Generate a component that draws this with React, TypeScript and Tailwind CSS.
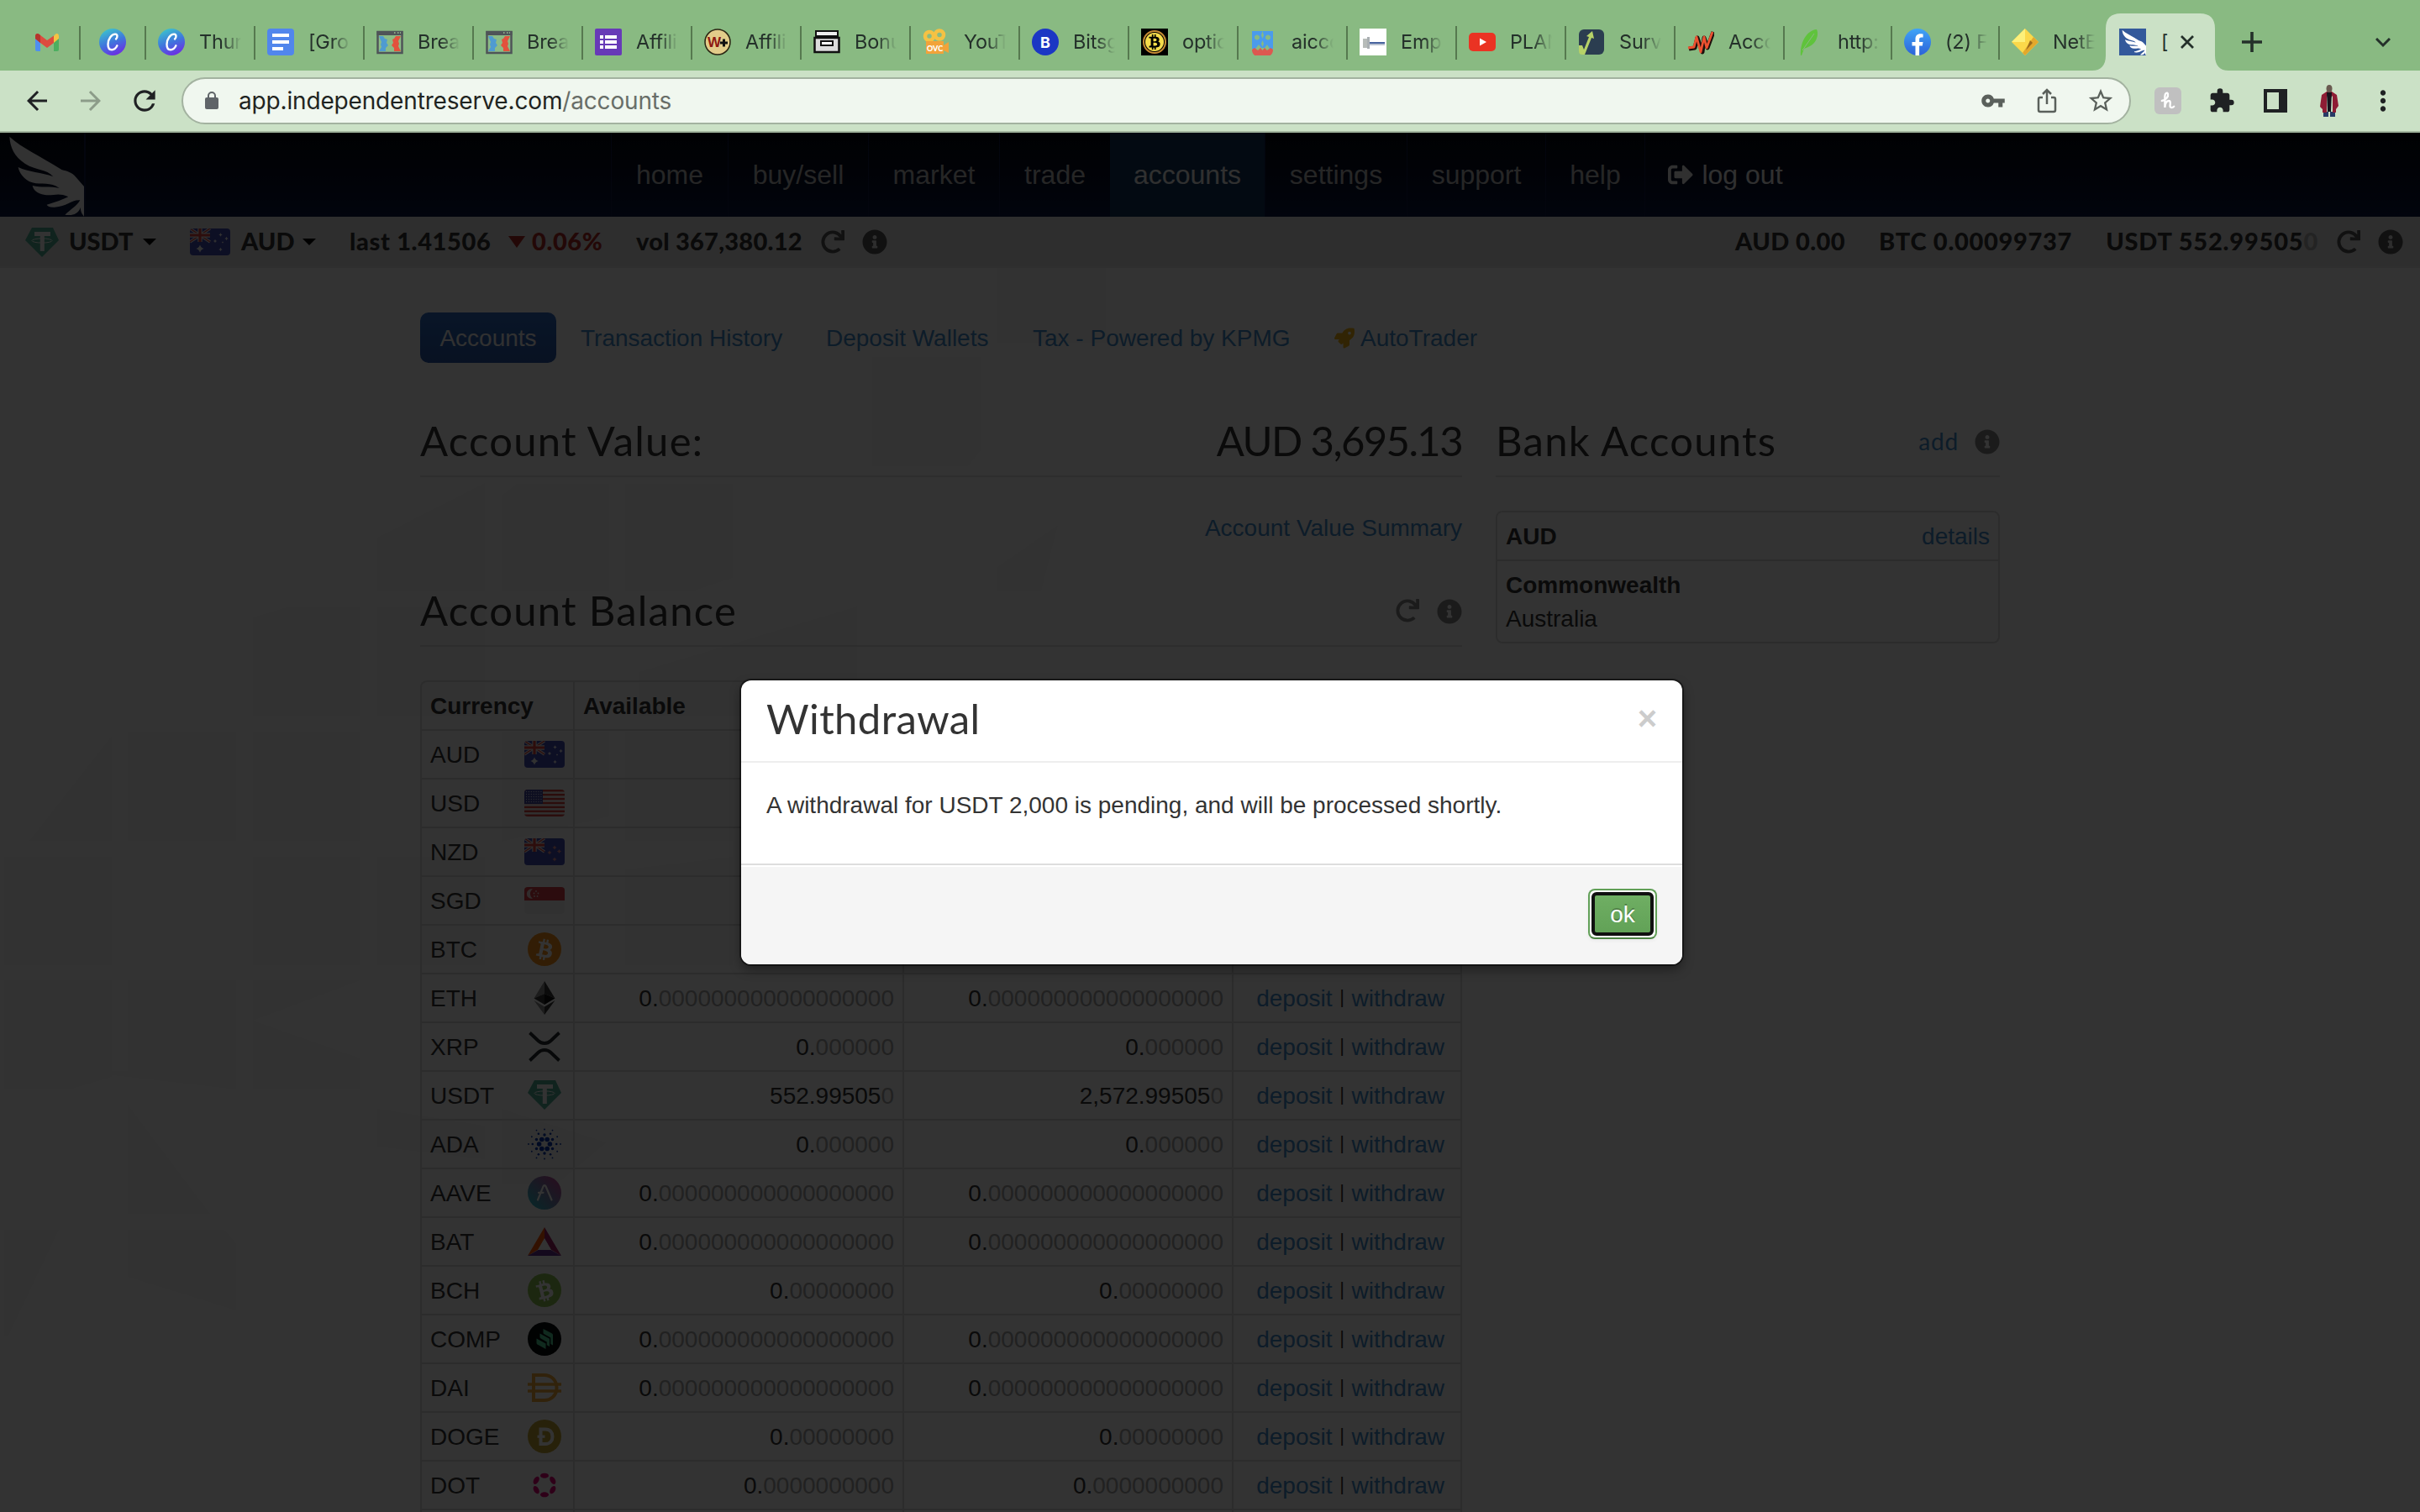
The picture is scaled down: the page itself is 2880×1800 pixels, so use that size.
import React from "react";
import { FaBtc, FaInfoCircle, FaRedo, FaRocket, FaSignOutAlt } from "react-icons/fa";
import {
  MdArrowBack,
  MdArrowForward,
  MdExtension,
  MdMoreVert,
  MdRefresh,
  MdStarBorder,
  MdVpnKey,
} from "react-icons/md";

/* ---------- favicons ---------- */

const Gmail = () => (
  <svg viewBox="0 0 32 32" className="size-8">
    <path d="M2 8v17a2 2 0 0 0 2 2h4V13z" fill="#4f8ff0" />
    <path d="M30 8v17a2 2 0 0 1-2 2h-4V13z" fill="#4caf60" />
    <path d="M24 9l2-2.400c2-1.200 4-.3 4 2.400v3l-6 5z" fill="#f5c342" />
    <path d="M2 9c0-3 3-3.600 4.500-2.200L16 14l8-5.500V17l-8 6-8-6-6-5z" fill="#dd4b3e" />
    <path d="M2 9c0-3 3-3.600 4.500-2.200L8 8v9l-6-5z" fill="#b5352c" />
  </svg>
);
const Canva = () => (
  <svg viewBox="0 0 32 32" className="size-8">
    <defs>
      <linearGradient id="cv" x1="0.3" y1="0" x2="0.7" y2="1">
        <stop offset="0" stopColor="#3cc2cd" />
        <stop offset="0.5" stopColor="#3f76dd" />
        <stop offset="1" stopColor="#7028e4" />
      </linearGradient>
    </defs>
    <circle cx="16" cy="16" r="16" fill="url(#cv)" />
    <path
      d="M20 12.500c2.200-2 2-5.600-.6-5.900-4.500-.4-8.900 6.200-8.900 12.100 0 4 1.700 6.600 4.600 6.600 2.700 0 5-2.200 6.300-5"
      fill="none"
      stroke="#fff"
      strokeWidth="2.400"
      strokeLinecap="round"
    />
  </svg>
);
const Docs = () => (
  <svg viewBox="0 0 32 32" className="size-8">
    <rect width="32" height="32" rx="4" fill="#5186ec" />
    <path d="M6 6h20v4H6zM6 14h20v4H6zM6 22h13v4H6z" fill="#fff" />
  </svg>
);
const Funnel = () => (
  <svg viewBox="0 0 32 32" className="size-8">
    <rect x="1.500" y="4" width="29" height="25" fill="#8cbc86" stroke="#4f5458" strokeWidth="2.500" />
    <rect x="0.500" y="3" width="31" height="5" fill="#4f5458" />
    <path d="M21 5h1.500M25 5h1.500M28 5h1" stroke="#9cc295" strokeWidth="1.500" />
    <path d="M3 9h5l2 3 3 1-1 4 2 3-3 3v4H3l3-5-1-3 1-3z" fill="#4f9bd0" />
    <path d="M29 9h-6l-2 3-2 1 1 4-2 3 3 3v4h8l-3-6 1-3-1-3z" fill="#e2523d" />
  </svg>
);
const Forms = () => (
  <svg viewBox="0 0 32 32" className="size-8">
    <rect width="32" height="32" rx="2" fill="#673ab7" />
    <path
      d="M6 8h4v4H6zM12 8h14v4H12zM6 14h4v4H6zM12 14h14v4H12zM6 20h4v4H6zM12 20h14v4H12z"
      fill="#fff"
    />
  </svg>
);
const WPlus = () => (
  <svg viewBox="0 0 32 32" className="size-8">
    <circle cx="16" cy="16" r="15" fill="#e2cc8a" stroke="#2a2412" strokeWidth="1.500" />
    <text x="4" y="22" fontSize="17" fontWeight="900" fill="#8e1a12" fontFamily="Liberation Sans, sans-serif">
      W
    </text>
    <path d="M19 17h9M23.500 12.500v9" stroke="#111" strokeWidth="3" />
  </svg>
);
const Box = () => (
  <svg viewBox="0 0 32 32" className="size-8">
    <path d="M3 3h26v6H3z" fill="#eee" stroke="#111" strokeWidth="2" />
    <path d="M1.500 11h29v17h-29z" fill="#ddd" stroke="#111" strokeWidth="2.500" />
    <path d="M9 15h14v5H9z" fill="#fff" stroke="#111" strokeWidth="2" />
  </svg>
);
const Camera = () => (
  <svg viewBox="0 0 32 32" className="size-8">
    <circle cx="8" cy="9" r="5" fill="none" stroke="#f5c243" strokeWidth="4.500" />
    <circle cx="20" cy="7.500" r="5" fill="none" stroke="#f5c243" strokeWidth="4.500" />
    <path d="M4 15h21v5l6-4v13l-6-3v4H4z" fill="#f2a33a" />
    <text x="5" y="26.500" fontSize="9" fontWeight="900" fill="#fff" fontFamily="Lato, sans-serif">
      OVC
    </text>
  </svg>
);
const BlueB = () => (
  <svg viewBox="0 0 32 32" className="size-8">
    <circle cx="16" cy="16" r="16" fill="#1b37c4" />
    <text x="16" y="22.500" textAnchor="middle" fontSize="18" fontWeight="700" fill="#fff" fontFamily="Inter, sans-serif">
      B
    </text>
  </svg>
);
const GoldBtc = () => (
  <div className="flex size-8 items-center justify-center bg-black">
    <div className="flex size-[28px] items-center justify-center rounded-full border-2 border-[#c58a34]">
      <div className="flex size-[22px] items-center justify-center rounded-full bg-[#f5dc4b]">
        <FaBtc className="size-[18px] text-black" />
      </div>
    </div>
  </div>
);
const Aicc = () => (
  <svg viewBox="0 0 32 32" className="size-8">
    <path d="M2 3h25v21h-4l-3-5-3 4h-4l-3-4-4 5H2z" fill="#4a9bec" />
    <path d="M14.500 3l1.500 5-1.500 4L13 8zM14.500 14l1.500 4-1.500 4-1.500-4z" fill="#89ba82" />
    <g fill="#89ba82" stroke="#89ba82">
      <circle cx="8" cy="10.500" r="2.600" />
      <circle cx="21" cy="10.500" r="2.600" />
    </g>
    <path d="M2 25l3-2 4 3 3-3 2.500 3 2.500-3 3 3 4-3 3 2c0 6-4 8.500-9 8.500h-7C5 33.500 2 30 2 25z" fill="#dd5850" />
  </svg>
);
const Emp = () => (
  <svg viewBox="0 0 32 32" className="size-8">
    <rect width="32" height="32" fill="#fff" />
    <path d="M4 12h5v11H4z" fill="#b7bcb9" />
    <path d="M9 10h3v14H9z" fill="#a9afb2" />
    <path d="M12 16h18v2H12z" fill="#47639f" />
    <path d="M12 18h18v2H12z" fill="#b9c1d0" />
  </svg>
);
const YouTube = () => (
  <svg viewBox="0 0 32 32" className="size-8">
    <rect y="5" width="32" height="22" rx="5" fill="#ea3323" />
    <path d="M13 11.500v9l8-4.500z" fill="#fff" />
  </svg>
);
const Surv = () => (
  <svg viewBox="0 0 32 32" className="size-8">
    <rect x="1" y="1" width="30" height="30" rx="6" fill="#2b3d50" />
    <path d="M1 20h4l2 5 6-15-3-1 7-6 2 9-3-1-8 20H5c-2 0-4-1-4-4z" fill="#b6d268" />
  </svg>
);
const Acco = () => (
  <svg viewBox="0 0 32 32" className="size-8" fill="none" strokeLinejoin="round">
    <path d="M2 24l7-1 3-12 6 17 2-17 4 12 7-19" stroke="#1d100d" strokeWidth="5" />
    <path d="M1 23l7-1 3-12 5 18 4-18 3 13 7-19" stroke="#ec5130" strokeWidth="2.800" />
  </svg>
);
const Feather = () => (
  <svg viewBox="0 0 32 32" className="size-8">
    <path d="M5 32C4 17 12 2 24 1c2 4 1 9-1 13-3 6-9 8-14 10l-3 8z" fill="#5fc33c" />
    <path d="M7 26L21 6" stroke="#8aba82" strokeWidth="1" />
  </svg>
);
const Facebook = () => (
  <svg viewBox="0 0 32 32" className="size-8">
    <defs>
      <linearGradient id="fb" x1="0" y1="0" x2="0" y2="1">
        <stop offset="0" stopColor="#3fa4f7" />
        <stop offset="1" stopColor="#2c62d9" />
      </linearGradient>
    </defs>
    <circle cx="16" cy="16" r="16" fill="url(#fb)" />
    <path d="M13.500 32V20.500H9.500V16h4v-3.500c0-4 2.300-6.200 5.900-6.200 1.700 0 3.200.3 3.200.3v4h-2c-2 0-2.500 1.200-2.500 2.500V16h4.400l-.7 4.500h-3.700V32z" fill="#fff" />
  </svg>
);
const Diamond = () => (
  <svg viewBox="0 0 32 32" className="size-8">
    <path d="M16 0l16 16-16 16L0 16z" fill="#fbd84a" />
    <path d="M16 0L0 16h16z" fill="#fdf07a" />
    <path d="M26 10l6 6-16 16-3-3z" fill="#e3a82c" />
    <path d="M22 14l3 3-8 9z" fill="#9a6b1c" />
  </svg>
);
const WING =
  "M34 38C80 80 140 105 220 156C240 162 256 164 272 184L300 216V323C290 312 287 300 288 290C280 312 262 322 232 317C250 300 275 285 286 265C255 262 240 288 195 290C180 291 170 288 167 281C200 272 225 262 244 253C210 236 190 250 160 246C130 242 118 225 116 213C145 222 180 213 212 222C180 198 150 212 115 202C85 193 68 165 65 147C100 165 150 165 190 181C165 152 130 160 90 135C50 108 36 75 34 38Z";
const WingTab = () => (
  <svg viewBox="0 0 32 32" className="size-8">
    <rect width="32" height="32" fill="#33599b" />
    <svg x="0" y="0" width="32" height="32" viewBox="0 22 300 302" preserveAspectRatio="none">
      <path d={WING} fill="#fff" />
    </svg>
  </svg>
);

/* ---------- browser chrome ---------- */

type TabItem = { icon: React.ReactNode; label: string; narrow?: boolean };
const tabs: TabItem[] = [
  { icon: <Canva />, label: "Thur" },
  { icon: <Docs />, label: "[Gro" },
  { icon: <Funnel />, label: "Brea" },
  { icon: <Funnel />, label: "Brea" },
  { icon: <Forms />, label: "Affili" },
  { icon: <WPlus />, label: "Affili" },
  { icon: <Box />, label: "Bonu" },
  { icon: <Camera />, label: "YouT" },
  { icon: <BlueB />, label: "Bitsg" },
  { icon: <GoldBtc />, label: "optic" },
  { icon: <Aicc />, label: "aicco" },
  { icon: <Emp />, label: "Emp" },
  { icon: <YouTube />, label: "PLAN" },
  { icon: <Surv />, label: "Surv" },
  { icon: <Acco />, label: "Acco" },
  { icon: <Feather />, label: "http:", narrow: true },
  { icon: <Facebook />, label: "(2) F", narrow: true },
  { icon: <Diamond />, label: "NetE", narrow: true },
];

function TabStrip() {
  return (
    <div className="flex h-[84px] bg-[#89ba82] text-[#24302a]">
      <div className="flex w-[94px] items-center pt-4 pl-10">
        <Gmail />
      </div>
      <div className="flex w-[78px] items-center pt-4">
        <div className="mt-0.5 h-10 w-0.5 bg-[#56794f]" />
        <div className="ml-[22px]">
          <Canva />
        </div>
      </div>
      {tabs.map((t, i) => (
        <div key={i} className={`flex shrink-0 items-center pt-4 ${t.narrow ? "w-[128px]" : "w-[130px]"}`}>
          <div className="mt-0.5 h-10 w-0.5 shrink-0 bg-[#56794f]" />
          <div className="ml-[14px] size-8 shrink-0">{t.icon}</div>
          <div className="ml-[17px] w-[50px] overflow-hidden text-[23.500px] leading-8 tracking-[-0.2px] whitespace-nowrap [mask-image:linear-gradient(to_right,#000_55%,transparent)]">
            {t.label}
          </div>
        </div>
      ))}
      <div className="relative flex h-full w-[130px] shrink-0 items-end">
        <svg className="absolute bottom-0 -left-4 h-[68px] w-[162px]" viewBox="0 0 162 68">
          <path d="M0 68C10 68 16 62 16 50V18C16 6 22 0 34 0H128C140 0 146 6 146 18V50C146 62 152 68 162 68Z" fill="#cbe1c6" />
        </svg>
        <div className="relative flex h-[68px] w-full items-center pl-4">
          <WingTab />
          <span className="ml-[18px] text-[23px] leading-8">[</span>
          <svg viewBox="0 0 16 16" className="ml-[15px] size-4" stroke="#24302a" strokeWidth="2.800">
            <path d="M1 1l14 14M15 1L1 15" />
          </svg>
        </div>
      </div>
      <svg viewBox="0 0 24 24" className="mt-[38px] ml-8 size-6" stroke="#24302a" strokeWidth="3.600">
        <path d="M0 12h24M12 0v24" />
      </svg>
      <svg viewBox="0 0 18 12" className="mt-[45px] mr-[35px] ml-auto h-3 w-[18px]" fill="none" stroke="#24302a" strokeWidth="3">
        <path d="M1 1l8 8 8-8" />
      </svg>
    </div>
  );
}

function Slot({ children }: { children: React.ReactNode }) {
  return <div className="flex w-16 shrink-0 items-center justify-center">{children}</div>;
}

function Toolbar() {
  return (
    <div className="flex h-[74px] items-center border-b-2 border-[#a2b59e] bg-[#cbe1c6] pl-3 text-[#1f2123]">
      <Slot>
        <MdArrowBack className="size-9" />
      </Slot>
      <Slot>
        <MdArrowForward className="size-9 text-[#8c9c89]" />
      </Slot>
      <Slot>
        <MdRefresh className="size-[38px]" />
      </Slot>
      <div className="ml-[12px] flex h-14 w-[2320px] items-center rounded-full border-2 border-[#a3b2a0] bg-[#f0f7ef] pl-[26px] text-[28px] text-[#1f2421]">
        <svg viewBox="0 0 16 22" className="h-[22px] w-4">
          <rect y="7" width="16" height="14" rx="2" fill="#5f6468" />
          <path d="M4 8V5a4 4 0 0 1 8 0v3" fill="none" stroke="#5f6468" strokeWidth="2" />
        </svg>
        <div className="ml-[24px] leading-9 tracking-[-0.16px]">
          app.independentreserve.com<span className="text-[#686e68]">/accounts</span>
        </div>
        <div className="ml-auto flex items-center pr-0.5 text-[#5a605b]">
          <Slot>
            <MdVpnKey className="size-[30px]" />
          </Slot>
          <Slot>
            <svg viewBox="0 0 24 30" className="h-[30px] w-6" fill="none" stroke="#5a605b" strokeWidth="2.500">
              <path d="M7 11H4a2 2 0 0 0-2 2v13a2 2 0 0 0 2 2h16a2 2 0 0 0 2-2V13a2 2 0 0 0-2-2h-3M12 19V3M7 7l5-5 5 5" />
            </svg>
          </Slot>
          <Slot>
            <MdStarBorder className="size-[34px]" />
          </Slot>
        </div>
      </div>
      <div className="ml-3 flex">
        <Slot>
          <div className="flex size-8 items-center justify-center rounded-md bg-[#c0c0c0]">
            <svg viewBox="0 0 20 24" className="h-[22px] w-[18px]" fill="none" stroke="#fff" strokeWidth="2.600" strokeLinecap="round">
              <path d="M2 12c5-1 9-5 8-9-1-3-4-1-4 3v15c0-5 2-9 5-9 4 0 1 6 2 8 1 1.500 3 1.500 5-.5" />
            </svg>
          </div>
        </Slot>
        <Slot>
          <MdExtension className="size-8" />
        </Slot>
        <Slot>
          <svg viewBox="0 0 28 28" className="size-7">
            <path d="M0 0h28v28H0z" fill="#1f2123" />
            <path d="M4 4h14v20H4z" fill="#cbe1c6" />
          </svg>
        </Slot>
        <Slot>
          <svg viewBox="0 0 24 40" className="h-10 w-6">
            <path d="M5 33h6v6H5zM13 33h6v6h-6z" fill="#283a66" />
            <path d="M3 13l6-4h6l6 4 2 13-3 4v4h-4V14l-4 4-3-4v20H4v-4l-3-3z" fill="#8e1c34" />
            <path d="M9 10h6l-1 23h-4z" fill="#17121c" />
            <ellipse cx="12" cy="5.500" rx="3.500" ry="4.500" fill="#6a5a50" />
          </svg>
        </Slot>
        <Slot>
          <MdMoreVert className="size-[38px]" />
        </Slot>
      </div>
    </div>
  );
}

/* ---------- flags and coins ---------- */

const UnionJack = () => (
  <g>
    <path d="M0 0l24 16M24 0L0 16" stroke="#eee" strokeWidth="3.400" />
    <path d="M0 0l24 16M24 0L0 16" stroke="#e0433f" strokeWidth="1.400" />
    <path d="M12 0v16M0 8h24" stroke="#eee" strokeWidth="5.400" />
    <path d="M12 0v16M0 8h24" stroke="#e0433f" strokeWidth="3.200" />
  </g>
);
const Flag = ({ children, bg }: { children: React.ReactNode; bg: string }) => (
  <svg viewBox="0 0 48 32" className="h-8 w-12 rounded-[4px]">
    <rect width="48" height="32" fill={bg} />
    {children}
  </svg>
);
const Stars = ({ pts, fill }: { pts: number[][]; fill: string }) => (
  <>
    {pts.map(([x, y, r], i) => (
      <path
        key={i}
        d={`M${x} ${y - r}L${x + r * 0.35} ${y - r * 0.35}L${x + r} ${y}L${x + r * 0.35} ${y + r * 0.35}L${x} ${y + r}L${x - r * 0.35} ${y + r * 0.35}L${x - r} ${y}L${x - r * 0.35} ${y - r * 0.35}Z`}
        fill={fill}
      />
    ))}
  </>
);
const FlagAU = () => (
  <Flag bg="#434bb4">
    <UnionJack />
    <Stars pts={[[12, 24, 4.5], [36.5, 7.5, 2.2], [30, 15, 2.2], [43.5, 12, 2.2], [39, 16.5, 1.2], [36.5, 25, 2.2]]} fill="#f4f4f4" />
    <circle cx="12" cy="24" r="2.300" fill="#f4f4f4" />
  </Flag>
);
const FlagNZ = () => (
  <Flag bg="#434bb4">
    <UnionJack />
    <Stars pts={[[36, 11, 2.6], [30, 17, 2.6], [41.5, 15.5, 2.6], [36, 25, 2.6]]} fill="#e28f95" />
  </Flag>
);
const FlagUS = () => (
  <Flag bg="#f0f0f0">
    {[0, 1, 2, 3, 4, 5, 6].map((i) => (
      <rect key={i} y={i * 4.92} width="48" height="2.460" fill="#d8403e" />
    ))}
    <rect width="22" height="17" fill="#4046a0" />
    {Array.from({ length: 35 }).map((_, i) => (
      <circle key={i} cx={2.5 + (i % 7) * 2.9} cy={2.5 + Math.floor(i / 7) * 3} r="0.700" fill="#d5d5ee" />
    ))}
  </Flag>
);
const FlagSG = () => (
  <Flag bg="#f6f6f6">
    <rect width="48" height="16" fill="#dc3c45" />
    <path d="M10 2.500a5.700 5.700 0 1 0 0 11a6.500 6.500 0 0 1 0-11z" fill="#f3dcdc" />
    {[[14, 5], [11.5, 7.5], [16.5, 7.5], [12, 11], [15.5, 11]].map(([x, y], i) => (
      <circle key={i} cx={x} cy={y} r="0.900" fill="#f3dcdc" />
    ))}
  </Flag>
);

const Coin = ({ children }: { children: React.ReactNode }) => (
  <svg viewBox="0 0 40 40" className="size-10">
    {children}
  </svg>
);
const Btc = () => (
  <div className="flex size-10 items-center justify-center rounded-full bg-[#f7931a]">
    <FaBtc className="size-[25px] rotate-[12deg] text-white" />
  </div>
);
const Bch = () => (
  <div className="flex size-10 items-center justify-center rounded-full bg-[#8dc351]">
    <FaBtc className="size-[25px] -rotate-[14deg] text-white" />
  </div>
);
const Eth = () => (
  <Coin>
    <path d="M20 0L7.500 20.500 20 15z" fill="#8a8a8a" />
    <path d="M20 0l12.500 20.500L20 15z" fill="#393939" />
    <path d="M20 15L7.500 20.500 20 28z" fill="#393939" />
    <path d="M20 15l12.500 5.500L20 28z" fill="#111" />
    <path d="M7.500 23L20 30.500V40z" fill="#8a8a8a" />
    <path d="M32.500 23L20 30.500V40z" fill="#393939" />
  </Coin>
);
const Xrp = () => (
  <Coin>
    <path
      d="M2.500 3.500l10 9.500c4.200 4 10.800 4 15 0L37.500 3.500M2.500 36.500l10-9.500c4.200-4 10.800-4 15 0L37.500 36.500"
      fill="none"
      stroke="#23292f"
      strokeWidth="3.800"
    />
  </Coin>
);
const Usdt = () => (
  <svg viewBox="0 0 40 36" className="h-9 w-10">
    <path d="M8 0h25l7 15-20 20L0 15z" fill="#50af95" />
    <path d="M11 5h19v5h-7.200v18h-5V10H11z" fill="#fff" />
    <ellipse cx="20" cy="15.500" rx="12" ry="2.600" fill="none" stroke="#fff" strokeWidth="1" />
  </svg>
);
const ring = (n: number, r: number, off: number) =>
  Array.from({ length: n }).map((_, i) => {
    const a = ((off + (360 / n) * i) * Math.PI) / 180;
    return [20 + r * Math.cos(a), 20 + r * Math.sin(a)];
  });
const Ada = () => (
  <Coin>
    {ring(6, 6.4, 0).map(([x, y], i) => (
      <circle key={`a${i}`} cx={x} cy={y} r="2.800" fill="#0033ad" />
    ))}
    {ring(6, 11, 30).map(([x, y], i) => (
      <circle key={`b${i}`} cx={x} cy={y} r="1.700" fill="#0033ad" />
    ))}
    {ring(6, 14.2, 0).map(([x, y], i) => (
      <circle key={`c${i}`} cx={x} cy={y} r="1.300" fill="#0033ad" />
    ))}
    {ring(6, 17.5, 30)
      .concat(ring(6, 19, 0))
      .map(([x, y], i) => (
        <circle key={`d${i}`} cx={x} cy={y} r="0.900" fill="#0033ad" />
      ))}
  </Coin>
);
const Aave = () => (
  <Coin>
    <defs>
      <linearGradient id="aave" x1="0.1" y1="0.9" x2="0.85" y2="0.15">
        <stop offset="0" stopColor="#2ebac6" />
        <stop offset="1" stopColor="#b6509e" />
      </linearGradient>
    </defs>
    <circle cx="20" cy="20" r="20" fill="url(#aave)" />
    <path d="M12 28.500l6.500-16.200c.6-1.500 2.400-1.500 3 0L28.500 28.500M13 19.800h5.500" fill="none" stroke="#fff" strokeWidth="2.200" strokeLinecap="round" />
  </Coin>
);
const Bat = () => (
  <Coin>
    <path d="M20 3v14l-7.500 12.500L0 37z" fill="#ff5500" />
    <path d="M20 3v14l7.500 12.500L40 37z" fill="#9e1f63" />
    <path d="M0 37l12.500-7h15L40 37z" fill="#662d91" />
    <path d="M20 16l8 14H12z" fill="#fff" />
  </Coin>
);
const Comp = () => (
  <Coin>
    <circle cx="20" cy="20" r="20" fill="#070a0e" />
    <path d="M10.500 19.500l11 6v6.500l-10-5.500q-1-.6-1-2z" fill="#4fd197" />
    <path d="M14.500 13.500l11.500 6.200v9.300l-3.200-1.800v-3.700l-7.500-4.200q-.8-.6-.8-1.800z" fill="#4fd197" />
    <path d="M18.500 8l10.500 5.500q1 .6 1 2v12l-2.700-1.500v-7.500l-8-4.500q-.8-.5-.8-1.600z" fill="#4fd197" />
  </Coin>
);
const Dai = () => (
  <Coin>
    <path d="M7 5h12.500c8.500 0 15 6 15 15s-6.500 15-15 15H7z" fill="none" stroke="#f5ac37" strokeWidth="4" />
    <path d="M0 16h40M0 24h40" stroke="#f5ac37" strokeWidth="3.600" />
  </Coin>
);
const Doge = () => (
  <Coin>
    <circle cx="20" cy="20" r="20" fill="#c2a633" />
    <path d="M15.500 11.500H21c5.500 0 8.500 3.600 8.500 8.700S26.500 29 21 29h-5.500z" fill="none" stroke="#fff" strokeWidth="4" />
    <path d="M11.500 20.200h9" stroke="#fff" strokeWidth="3.200" />
  </Coin>
);
const Dot = () => (
  <Coin>
    {[0, 60, 120, 180, 240, 300].map((a) => (
      <ellipse key={a} cx="20" cy="8.700" rx="5" ry="3" fill="#e6007a" transform={`rotate(${a} 20 20)`} />
    ))}
  </Coin>
);

/* ---------- page ---------- */

const nav: [string, string][] = [
  ["home", "w-[139px]"],
  ["buy/sell", "w-[167px]"],
  ["market", "w-[156px]"],
  ["trade", "w-[132px]"],
  ["accounts", "w-[184px]"],
  ["settings", "w-[169px]"],
  ["support", "w-[165px]"],
  ["help", "w-[118px]"],
  ["log out", "w-[192px]"],
];

function NavBar() {
  return (
    <div className="flex h-[100px] bg-gradient-to-b from-[#04080f] via-[#060f2b] via-60% to-[#0a1842]">
      <div className="w-[102px] border-r-2 border-[#0f1c48]">
        <svg viewBox="0 24 300 300" className="size-[100px]">
          <path d={WING} fill="#fafafa" />
        </svg>
      </div>
      <div className="ml-[625px] flex text-[32px]">
        {nav.map(([label, w]) => {
          const active = label === "accounts";
          const bright = active || label === "log out";
          return (
            <div
              key={label}
              className={`flex items-center justify-center ${w} ${active ? "bg-[#12355a]" : "border-l border-[#0f1c48]"} ${bright ? "text-[#f0f0f0]" : "text-[#bcbcbc]"}`}
            >
              {label === "log out" && <FaSignOutAlt className="mr-2.5 size-[30px]" />}
              {label}
            </div>
          );
        })}
      </div>
    </div>
  );
}

const Caret = () => (
  <span className="ml-[10px] h-0 w-0 border-x-8 border-t-8 border-x-transparent border-t-black" />
);

function TickerBar() {
  return (
    <div className="flex h-[61px] items-center border-b-2 border-[#ececec] bg-[#e6e6e6] pr-5 pl-[30px] font-[Lato] text-[29px] leading-[58px] font-black text-[#333]">
      <div className="h-[34px]">
        <Usdt />
      </div>
      <span className="ml-3 w-[78px] pb-0.5">USDT</span>
      <Caret />
      <div className="ml-[40px] h-8">
        <FlagAU />
      </div>
      <span className="ml-[13px] w-[63px] pb-0.5">AUD</span>
      <Caret />
      <span className="ml-[40px] w-[170px] pb-0.5 tracking-[0.65px] whitespace-nowrap">last 1.41506</span>
      <span className="ml-[19px] h-0 w-0 border-x-[10px] border-t-[14px] border-x-transparent border-t-[#b02a25]" />
      <span className="ml-2 w-[84px] pb-0.5 tracking-[0.6px] text-[#b02a25]">0.06%</span>
      <span className="ml-[40px] w-[198px] pb-0.5 tracking-[0.25px] whitespace-nowrap">vol 367,380.12</span>
      <FaRedo className="ml-[22px] size-[28px] text-[#555]" />
      <FaInfoCircle className="ml-[21px] size-[30px] text-[#555]" />
      <span className="ml-auto pb-0.5 tracking-[0.4px]">AUD 0.00</span>
      <span className="ml-[40px] pb-0.5 tracking-[0.7px]">BTC 0.00099737</span>
      <span className="ml-[40px] pb-0.5 tracking-[0.8px]">
        USDT 552.99505<span className="text-[#b0b0b0]">0</span>
      </span>
      <FaRedo className="ml-[22px] size-[28px] text-[#555]" />
      <FaInfoCircle className="ml-[21px] size-[30px] text-[#555]" />
    </div>
  );
}

type Row = { c: string; icon: React.ReactNode; a?: [string, string]; t?: [string, string] };
const Z18 = "000000000000000000";
const rows: Row[] = [
  { c: "AUD", icon: <FlagAU /> },
  { c: "USD", icon: <FlagUS /> },
  { c: "NZD", icon: <FlagNZ /> },
  { c: "SGD", icon: <FlagSG /> },
  { c: "BTC", icon: <Btc /> },
  { c: "ETH", icon: <Eth />, a: ["0.", Z18], t: ["0.", Z18] },
  { c: "XRP", icon: <Xrp />, a: ["0.", "000000"], t: ["0.", "000000"] },
  { c: "USDT", icon: <Usdt />, a: ["552.99505", "0"], t: ["2,572.99505", "0"] },
  { c: "ADA", icon: <Ada />, a: ["0.", "000000"], t: ["0.", "000000"] },
  { c: "AAVE", icon: <Aave />, a: ["0.", Z18], t: ["0.", Z18] },
  { c: "BAT", icon: <Bat />, a: ["0.", Z18], t: ["0.", Z18] },
  { c: "BCH", icon: <Bch />, a: ["0.", "00000000"], t: ["0.", "00000000"] },
  { c: "COMP", icon: <Comp />, a: ["0.", Z18], t: ["0.", Z18] },
  { c: "DAI", icon: <Dai />, a: ["0.", Z18], t: ["0.", Z18] },
  { c: "DOGE", icon: <Doge />, a: ["0.", "00000000"], t: ["0.", "00000000"] },
  { c: "DOT", icon: <Dot />, a: ["0.", "0000000000"], t: ["0.", "0000000000"] },
];

const Amount = ({ v }: { v?: [string, string] }) => (
  <div className="border-l-2 border-[#ddd] pr-[10px] text-right">
    {v && (
      <>
        {v[0]}
        <span className="text-[#a6a6a6]">{v[1]}</span>
      </>
    )}
  </div>
);

function BalanceTable() {
  return (
    <div className="mt-10 rounded-t-lg border-2 border-b-0 border-[#ddd] leading-[58px]">
      <div className="grid h-14 grid-cols-[180px_392px_392px_1fr] font-bold">
        <div className="pl-[10px]">Currency</div>
        <div className="border-l-2 border-[#ddd] pl-[10px]">Available</div>
        <div className="border-l-2 border-[#ddd]" />
        <div className="border-l-2 border-[#ddd]" />
      </div>
      {rows.map((r) => (
        <div key={r.c} className="grid h-[58px] grid-cols-[180px_392px_392px_1fr] grid-rows-[56px] border-t-2 border-[#ddd]">
          <div className="flex justify-between pr-[10px] pl-[10px]">
            {r.c}
            <div className="flex h-14 w-12 items-center justify-center">{r.icon}</div>
          </div>
          <Amount v={r.a} />
          <Amount v={r.t} />
          <div className="flex justify-end border-l-2 border-[#ddd] pr-[19px]">
            {r.a && (
              <>
                <span className="text-[#428bca]">deposit</span>
                <span className="w-[23px] text-center text-[22px] leading-[54px]">|</span>
                <span className="text-[#428bca]">withdraw</span>
              </>
            )}
          </div>
        </div>
      ))}
      <div className="grid h-[58px] grid-cols-[180px_392px_392px_1fr] border-t-2 border-[#ddd]">
        <div />
        <div className="border-l-2 border-[#ddd]" />
        <div className="border-l-2 border-[#ddd]" />
        <div className="border-l-2 border-[#ddd]" />
      </div>
    </div>
  );
}

const Heading = ({ children, tight }: { children: React.ReactNode; tight?: boolean }) => (
  <h2 className={`font-[Lato] text-[49px] leading-[77px] text-[#333] ${tight ? "tracking-[-1.6px]" : "tracking-[1.25px]"}`}>
    {children}
  </h2>
);

function Backdrop() {
  return (
    <svg viewBox="0 0 1400 1642" className="absolute top-0 left-0 h-[1642px] w-[1400px]" fill="#f9f9f9">
      <g transform="translate(0 -158)">
        <path d="M1186 278h130v130h-130zM1038 425h130v110l-16 20h-114zM1187 675l72-50-20 79h-52z" />
        <path d="M449 640l128-65v128H449zM615 576h110v127H597V590zM744 576h128v112l-45 15h-83z" />
        <path d="M301 735l40-12h88v129H301zM449 723h128v129H449zM760 800l260-78v130H760z" />
        <path d="M35 1001l98-125v125zM152 872h129v129H152zM301 872h128v129H301zM597 872h128v100l-128 30zM744 872h128v129H744z" />
        <path d="M5 1020h128v129H5zM301 1020h128v129H301zM449 1020h128v129H449zM744 1035l128-15v129H744z" />
        <path d="M5 1167h128v115l-50 15H5zM152 1167h129v130l-190-22h61zM301 1167h128l-128 48zM301 1215l128 45v37H301z" />
        <path d="M152 1315l98 130h-98zM449 1320l128 20v40l-128-15zM597 1320l125 40-60 50h-65z" />
        <path d="M5 1464h65L10 1590H5zM152 1464h115l14 16v80l-129-40z" />
      </g>
    </svg>
  );
}

function Page() {
  return (
    <div className="relative h-[1642px] overflow-hidden bg-white font-['Liberation_Sans',sans-serif] text-[28px] text-[#333]">
      <Backdrop />
      <div className="relative">
        <NavBar />
        <TickerBar />
        <div className="mx-auto w-[1880px]">
          <div className="mt-[53px] flex h-[60px] text-[28px] leading-[62px] text-[#428bca]">
            <div className="w-[162px] rounded-[10px] bg-gradient-to-b from-[#2e6cc4] to-[#2857a8] text-center text-[#f4f4f4]">
              Accounts
            </div>
            <div className="ml-[29px] w-[240px] whitespace-nowrap">Transaction History</div>
            <div className="ml-[52px] w-[194px] whitespace-nowrap">Deposit Wallets</div>
            <div className="ml-[52px] w-[306px] whitespace-nowrap">Tax - Powered by KPMG</div>
            <div className="ml-[53px] flex">
              <FaRocket className="mt-[18px] mr-[7px] h-[25px] w-[24px] text-[#f5b518]" />
              AutoTrader
            </div>
          </div>
          <div className="mt-[54px] flex">
            <div className="w-[1240px]">
              <div className="flex h-[82px] justify-between border-b-2 border-[#e0e0e0]">
                <Heading>Account Value:</Heading>
                <Heading tight>AUD 3,695.13</Heading>
              </div>
              <div className="mt-[41px] text-right leading-10 text-[#428bca]">Account Value Summary</div>
              <div className="mt-[39px] flex h-[82px] items-start justify-between border-b-2 border-[#e0e0e0]">
                <Heading>Account Balance</Heading>
                <div className="mt-[25px] flex gap-[21px] text-[#888]">
                  <FaRedo className="size-[28px]" />
                  <FaInfoCircle className="size-[30px]" />
                </div>
              </div>
              <BalanceTable />
            </div>
            <div className="ml-10 w-[600px]">
              <div className="flex h-[82px] items-start border-b-2 border-[#e0e0e0]">
                <Heading>Bank Accounts</Heading>
                <span className="ml-auto font-[Lato] text-[28px] leading-[78px] tracking-[0.8px] text-[#428bca]">add</span>
                <FaInfoCircle className="mt-[25px] ml-[19px] size-[30px] text-[#888]" />
              </div>
              <div className="mt-10 rounded-lg border-2 border-[#ddd]">
                <div className="flex h-14 justify-between px-[10px] leading-[58px]">
                  <b>AUD</b>
                  <span className="text-[#428bca]">details</span>
                </div>
                <div className="h-[98px] border-t-2 border-[#ddd] px-[10px] pt-[9px] leading-10">
                  <b>Commonwealth</b>
                  <div>Australia</div>
                </div>
              </div>
            </div>
          </div>
        </div>
      </div>
      <div className="absolute inset-0 bg-black/80" />
    </div>
  );
}

function Modal() {
  return (
    <div className="absolute top-[810px] left-[882px] flex h-[338px] w-[1120px] flex-col overflow-hidden rounded-xl bg-white font-['Liberation_Sans',sans-serif] text-[28px] text-[#333] shadow-[0_0_0_2px_rgba(0,0,0,0.45),0_6px_14px_rgba(0,0,0,0.4)]">
      <div className="flex h-[98px] items-start justify-between border-b-2 border-[#eee] pr-[30px] pl-[30px]">
        <h3 className="font-[Lato] text-[49px] leading-[91px] tracking-[0.4px]">Withdrawal</h3>
        <span className="pt-[25px] text-[40px] leading-10 font-bold text-[#ccc]">×</span>
      </div>
      <div className="h-[120px] pt-[31px] pl-[30px] leading-10">
        A withdrawal for USDT 2,000 is pending, and will be processed shortly.
      </div>
      <div className="flex flex-1 justify-end border-t-2 border-[#ddd] bg-[#f5f5f5] pt-7 pr-[30px] shadow-[inset_0_2px_0_#fff]">
        <div className="h-[60px] w-[82px] rounded-lg border-2 border-[#62a058] border-b-[#4c8443] bg-white p-0.5 shadow-[0_2px_4px_rgba(0,0,0,0.05)]">
          <div className="h-full rounded-md border-4 border-[#101010] bg-gradient-to-b from-[#6fae63] to-[#62a257] text-center leading-[45px] text-white [text-shadow:0_-2px_0_rgba(0,0,0,0.25)]">
            ok
          </div>
        </div>
      </div>
    </div>
  );
}

export default function App() {
  return (
    <div className="relative h-[1800px] w-[2880px] overflow-hidden font-[Inter,sans-serif]">
      <TabStrip />
      <Toolbar />
      <Page />
      <Modal />
    </div>
  );
}
